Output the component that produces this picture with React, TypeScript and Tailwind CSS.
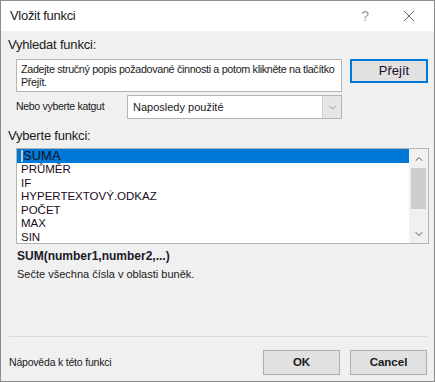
import { ChevronDown, ChevronUp } from 'lucide-react'

const functions = ['SUMA', 'PRŮMĚR', 'IF', 'HYPERTEXTOVÝ.ODKAZ', 'POČET', 'MAX', 'SIN']

export default function App() {
  return (
    <div
      className="w-[435px] h-[382px] border border-[#8c8c8c] flex flex-col text-[#1a1a1a]"
      style={{ fontFamily: '"Liberation Sans", Arial, sans-serif' }}
    >
      {/* Title bar */}
      <div className="h-[30px] bg-white flex items-center shrink-0">
        <span className="ml-[9px] text-[13px] tracking-[-0.3px]">Vložit funkci</span>
        <span className="ml-auto text-[14px] text-[#a0a0a0] mr-[34px]">?</span>
        <svg width="12" height="12" viewBox="0 0 12 12" className="mr-[19px]">
          <path d="M1 1 L11 11 M11 1 L1 11" stroke="#6a6a6a" strokeWidth="1" />
        </svg>
      </div>

      {/* Body */}
      <div className="flex-1 bg-[#f0f0f0] pl-[7px] pr-[6px] flex flex-col">
        <div className="mt-[6px] text-[13px] leading-[16px] tracking-[-0.2px]">Vyhledat funkci:</div>

        <div className="mt-[6px] flex items-start">
          <div className="ml-[8px] w-[326px] h-[33px] bg-white border border-[#b4b4b4] px-[4px] pt-[3px] text-[10.8px] leading-[13px] tracking-[-0.35px]">
            Zadejte stručný popis požadované činnosti a potom klikněte na tlačítko Přejít.
          </div>
          <button className="ml-[8px] w-[78px] h-[24px] bg-[#e1e1e1] border-2 border-[#0078d7] text-[13px] text-[#1a0a2a] pl-[10px]">
            Přejít
          </button>
        </div>

        <div className="mt-[3px] flex items-center">
          <span className="ml-[8px] w-[111px] text-[10.5px] tracking-[-0.3px]">Nebo vyberte katgut</span>
          <div className="w-[215px] h-[24px] bg-white border border-[#b4b4b4] flex items-stretch">
            <span className="flex-1 pl-[5px] text-[11px] flex items-center">Naposledy použité</span>
            <div className="w-[19px] bg-[#e6e6e6] border-l border-[#cfcfcf] flex items-center justify-center">
              <ChevronDown size={13} strokeWidth={1.2} color="#707070" />
            </div>
          </div>
        </div>

        <div className="mt-[9px] text-[13px] leading-[16px] tracking-[-0.2px]">Vyberte funkci:</div>

        <div className="mt-[4px] ml-[8px] w-[413px] h-[96px] bg-white border border-[#b4b4b4] flex">
          <div className="flex-1 flex flex-col">
            {functions.map((f, i) => (
              <div
                key={f}
                className={
                  i === 0
                    ? 'h-[14px] bg-[#0078d7] pl-[4px] text-[13px] leading-[14px] text-[#101020] flex items-center'
                    : 'h-[13.5px] pl-[4px] text-[11.5px] leading-[13.5px] text-[#1a0a20]'
                }
              >
                {i === 0 && <span className="w-[2px] h-[12px] bg-[#c0c8d8]" />}
                {f}
              </div>
            ))}
          </div>
          <div className="w-[19px] bg-[#f0f0f0] flex flex-col items-center">
            <ChevronUp size={12} strokeWidth={2} color="#555" className="mt-[4px]" />
            <div className="mt-[3px] w-[15px] h-[41px] bg-[#cdcdcd]" />
            <ChevronDown size={12} strokeWidth={2} color="#555" className="mt-auto mb-[3px]" />
          </div>
        </div>

        <div className="mt-[4px] ml-[9px] text-[12px] font-bold leading-[16px] text-[#1a1a2a]">
          SUM(number1,number2,...)
        </div>
        <div className="mt-[3px] ml-[9px] text-[11px] leading-[14px]">Sečte všechna čísla v oblasti buněk.</div>

        <div className="mt-auto ml-[1px] mr-[1px] h-px bg-[#dadada]" />
        <div className="mt-[13px] mb-[6px] flex items-center">
          <span className="ml-[1px] text-[10.5px] tracking-[-0.2px]">Nápověda k této funkci</span>
          <button className="ml-auto w-[77px] h-[25px] bg-[#e1e1e1] border border-[#adadad] text-[11.5px] font-semibold">
            OK
          </button>
          <button className="ml-[10px] mr-[1px] w-[77px] h-[25px] bg-[#e1e1e1] border border-[#adadad] text-[11.5px] font-semibold">
            Cancel
          </button>
        </div>
      </div>
    </div>
  )
}
